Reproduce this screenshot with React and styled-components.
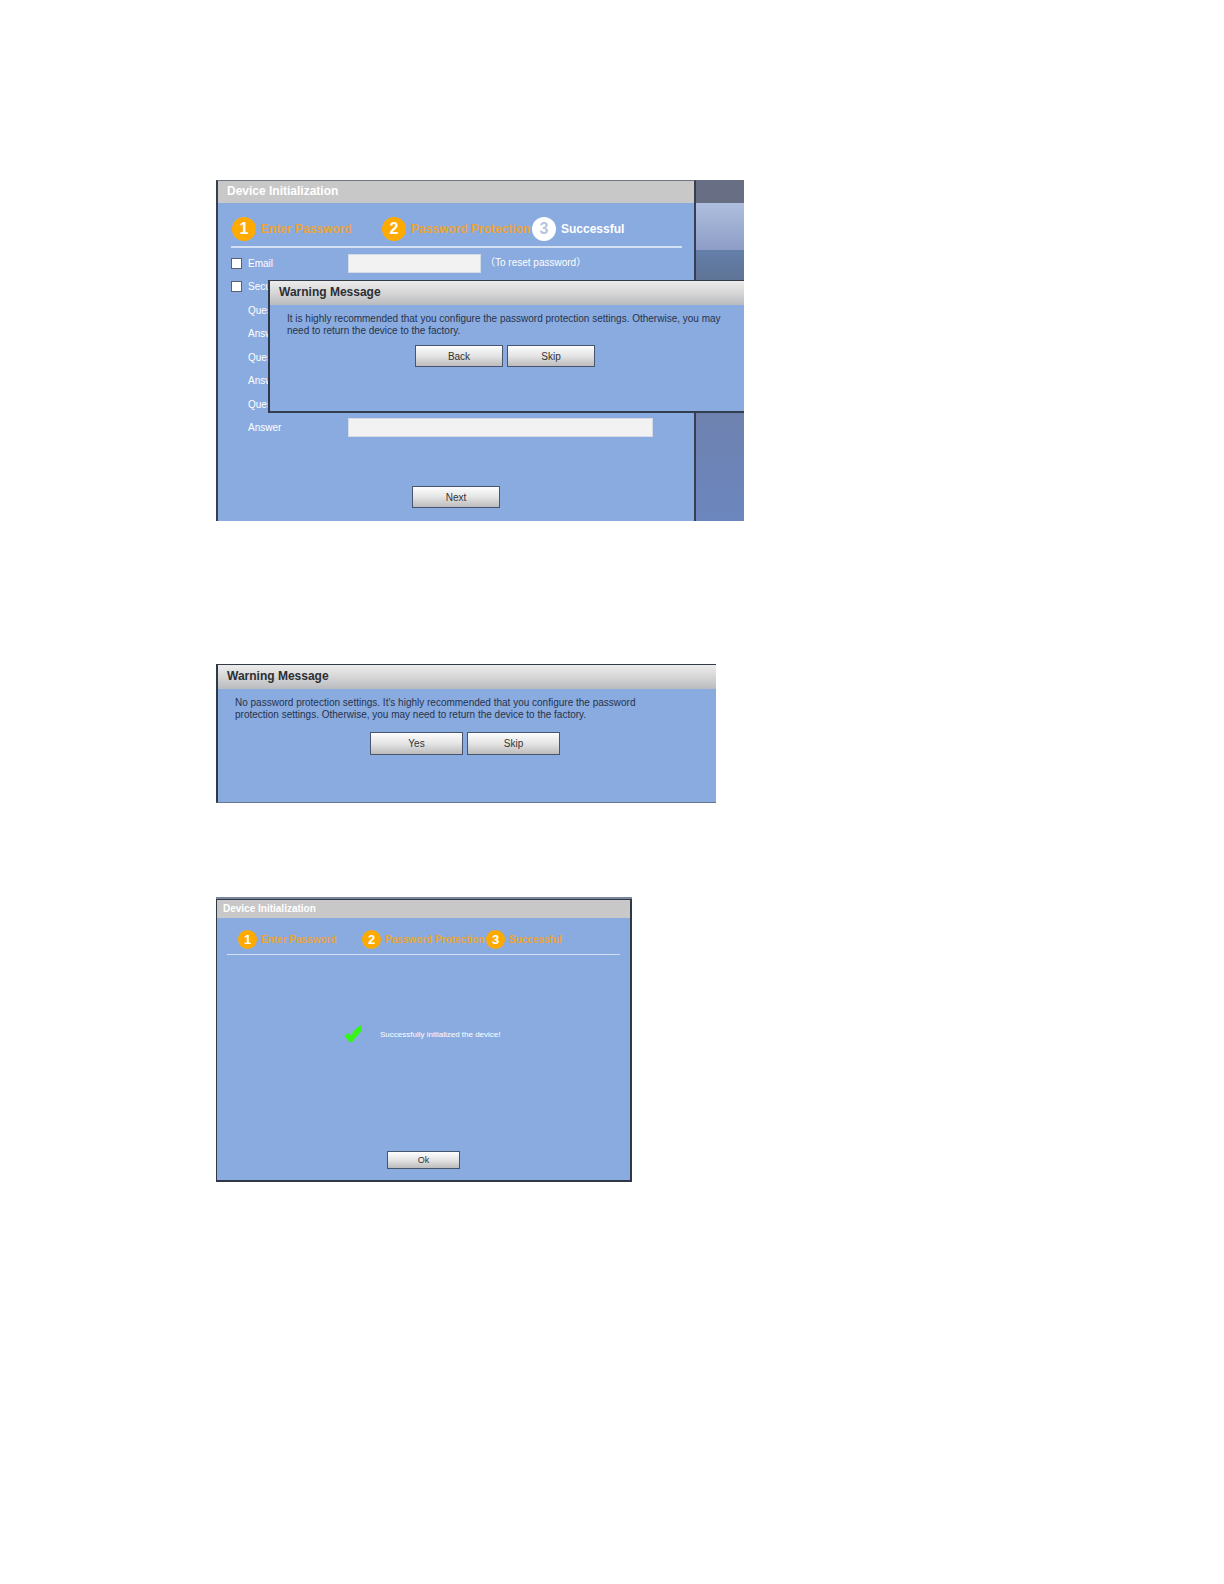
import React from 'react';
import styled, { createGlobalStyle } from 'styled-components';

const GlobalStyle = createGlobalStyle`
  * {
    box-sizing: border-box;
  }
  body {
    margin: 0;
    background-color: #fff;
    font-family: "Liberation Sans", Arial, "Noto Sans CJK SC", sans-serif;
    font-size: 10px;
  }
`;

const Page = styled.main`
  padding: 180px 16px 180px 216px;
`;

const Desktop = styled.section`
  position: relative;
  max-width: 528px;
  overflow: hidden;
  background: linear-gradient(
    #686e83 0 23px,
    #aebfde 23px,
    #8d9dc6 70px,
    #647fa9 70px,
    #5f7496 100px,
    #6f82af 232px,
    #6c84b8 295px,
    #6c87be 100%
  );
`;

const SetupWindow = styled.div`
  width: 480px;
  max-width: 100%;
  padding-bottom: 13px;
  background-color: #8aabdf;
  border: 2px solid #353f50;
  border-top: 1px solid #707583;
  border-bottom: none;
`;

const WindowTitle = styled.h2`
  margin: 0;
  height: ${({ $small }) => ($small ? '18px' : '22px')};
  padding-left: ${({ $small }) => ($small ? '6px' : '9px')};
  line-height: ${({ $small }) => ($small ? '18px' : '21px')};
  font-size: ${({ $small }) => ($small ? '10px' : '12px')};
  color: #fff;
  background-color: #c8c8c8;
`;

const StepList = styled.ol`
  display: grid;
  grid-template-columns: ${({ $small }) => ($small ? '124px 124px 1fr' : '150px 150px 1fr')};
  margin: ${({ $small }) => ($small ? '12px 10px 0' : '14px 12px 0 13px')};
  padding: ${({ $small }) => ($small ? '0 0 5px 11px' : '0 0 5px 1px')};
  list-style: none;
  border-bottom: ${({ $small }) => ($small ? '1px' : '2px')} solid #d3dff3;
`;

const StepItem = styled.li`
  display: flex;
  align-items: center;
  gap: ${({ $small }) => ($small ? '4px' : '5px')};
  font-size: ${({ $small }) => ($small ? '10px' : '12px')};
  line-height: 14px;
  font-weight: 700;
  white-space: nowrap;
  color: ${({ $pending }) => ($pending ? '#fff' : '#eba436')};
`;

const StepNumber = styled.span`
  display: flex;
  align-items: center;
  justify-content: center;
  flex-shrink: 0;
  width: ${({ $small }) => ($small ? '19px' : '24px')};
  height: ${({ $small }) => ($small ? '19px' : '24px')};
  border-radius: 50%;
  font-size: ${({ $small }) => ($small ? '13px' : '16px')};
  color: ${({ $pending }) => ($pending ? '#b9c4dd' : '#fff')};
  background-color: ${({ $pending }) => ($pending ? '#fff' : '#ffaa00')};
`;

const Form = styled.form`
  display: grid;
  grid-template-columns: 17px 100px 1fr;
  grid-auto-rows: 24px 23px;
  align-items: center;
  margin: 3px 13px 0;
  color: #fff;
`;

const CheckBox = styled.input`
  appearance: none;
  width: 11px;
  height: 11px;
  margin: 0;
  background-color: #fff;
  border: 1px solid #5a6270;
`;

const FieldLabel = styled.label`
  grid-column: 2;
`;

const Field = styled.div`
  display: flex;
  align-items: center;
  gap: 4px;
  line-height: 12px;
`;

const TextInput = styled.input`
  width: ${({ $wide }) => ($wide ? '305px' : '133px')};
  height: 19px;
  padding: 0 4px;
  font: inherit;
  background-color: #f2f2f2;
  border: 1px solid #d5dbe6;
`;

const ButtonRow = styled.div`
  display: flex;
  justify-content: center;
  gap: 4px;
  margin-top: ${({ $top }) => $top}px;
`;

const WarningActions = styled(ButtonRow)`
  padding-right: 4px;
`;

const Button = styled.button`
  width: ${({ $width = 88 }) => $width}px;
  height: ${({ $height = 22 }) => $height}px;
  padding: 0;
  font-family: inherit;
  font-size: ${({ $small }) => ($small ? '9px' : '10px')};
  color: #333;
  background: linear-gradient(#fdfdfd, #e4e4e4 50%, #bdbbbc);
  border: 1px solid #48566d;
`;

const WarningBox = styled.div`
  height: ${({ $height }) => $height}px;
  max-width: 500px;
  background-color: #8aabdf;
  border-top: 1px solid #333b46;
  border-left: 2px solid #2d3849;
  border-bottom: ${({ $overlay }) => ($overlay ? '2px solid #333e4f' : '1px solid #66748e')};
`;

const OverlayWarning = styled(WarningBox)`
  position: absolute;
  top: 100px;
  left: 52px;
  right: 0;
`;

const WarningTitle = styled.h2`
  margin: 0;
  height: 24px;
  padding-left: 9px;
  line-height: 23px;
  font-size: 12px;
  color: #2c2f35;
  background: linear-gradient(#ececec, #d6d6d6 50%, #b9bbbf);
`;

const WarningText = styled.p`
  margin: 0;
  padding: 8px 10px 0 17px;
  line-height: 12px;
  color: #26334d;
`;

const StandaloneWarning = styled.section`
  margin-top: 143px;
`;

const ResultShot = styled.section`
  max-width: 416px;
  margin-top: 94px;
  padding-top: 2px;
  background-color: #7c879f;
`;

const ResultWindow = styled.div`
  padding-bottom: 11px;
  background-color: #8aabdf;
  border: 1px solid #303848;
  border-right-width: 2px;
  border-bottom-width: 2px;
`;

const ResultMessage = styled.div`
  display: flex;
  align-items: center;
  gap: 18px;
  margin-top: 70px;
  padding-left: 127px;
  font-size: 8px;
  color: #fff;
`;

const Steps = ({ current, small }) => (
  <StepList $small={small}>
    {['Enter Password', 'Password Protection', 'Successful'].map((name, i) => (
      <StepItem key={name} $small={small} $pending={i >= current}>
        <StepNumber $small={small} $pending={i >= current}>{i + 1}</StepNumber>
        {name}
      </StepItem>
    ))}
  </StepList>
);

const Tick = () => (
  <svg width="18" height="18" viewBox="0 0 18 18" aria-hidden="true">
    <path d="M0.3 11 L4 8 L7 10.5 Q10.5 4 16 0.5 L17.6 1 L17 6.5 Q12 11.5 8 17.5 L5.5 17 Z" fill="#35f516" />
  </svg>
);

export default function App() {
  return (
    <Page>
      <GlobalStyle />

      <Desktop>
        <SetupWindow>
          <WindowTitle>Device Initialization</WindowTitle>
          <Steps current={2} />
          <Form>
            <CheckBox type="checkbox" id="use-email" />
            <FieldLabel htmlFor="use-email">Email</FieldLabel>
            <Field>
              <TextInput type="email" aria-label="Email" />
              <span>（To reset password）</span>
            </Field>
            <CheckBox type="checkbox" id="use-questions" />
            <FieldLabel htmlFor="use-questions">Secu</FieldLabel>
            <span />
            <span />
            <FieldLabel as="span">Ques</FieldLabel>
            <span />
            <span />
            <FieldLabel as="span">Answ</FieldLabel>
            <span />
            <span />
            <FieldLabel as="span">Ques</FieldLabel>
            <span />
            <span />
            <FieldLabel as="span">Answ</FieldLabel>
            <span />
            <span />
            <FieldLabel as="span">Ques</FieldLabel>
            <span />
            <span />
            <FieldLabel htmlFor="answer-3">Answer</FieldLabel>
            <TextInput id="answer-3" type="text" $wide />
          </Form>
          <ButtonRow $top={47}>
            <Button type="button">Next</Button>
          </ButtonRow>
        </SetupWindow>

        <OverlayWarning role="dialog" aria-labelledby="overlay-title" $height={133} $overlay>
          <WarningTitle id="overlay-title">Warning Message</WarningTitle>
          <WarningText>
            It is highly recommended that you configure the password protection settings. Otherwise, you may
            <br />
            need to return the device to the factory.
          </WarningText>
          <WarningActions $top={8}>
            <Button type="button">Back</Button>
            <Button type="button">Skip</Button>
          </WarningActions>
        </OverlayWarning>
      </Desktop>

      <StandaloneWarning>
        <WarningBox $height={139}>
          <WarningTitle>Warning Message</WarningTitle>
          <WarningText>
            No password protection settings. It's highly recommended that you configure the password
            <br />
            protection settings. Otherwise, you may need to return the device to the factory.
          </WarningText>
          <WarningActions $top={11}>
            <Button type="button" $width={93} $height={23}>Yes</Button>
            <Button type="button" $width={93} $height={23}>Skip</Button>
          </WarningActions>
        </WarningBox>
      </StandaloneWarning>

      <ResultShot>
        <ResultWindow>
          <WindowTitle $small>Device Initialization</WindowTitle>
          <Steps current={3} small />
          <ResultMessage>
            <Tick />
            Successfully initialized the device!
          </ResultMessage>
          <ButtonRow $top={108}>
            <Button type="button" $width={73} $height={18} $small>Ok</Button>
          </ButtonRow>
        </ResultWindow>
      </ResultShot>
    </Page>
  );
}
